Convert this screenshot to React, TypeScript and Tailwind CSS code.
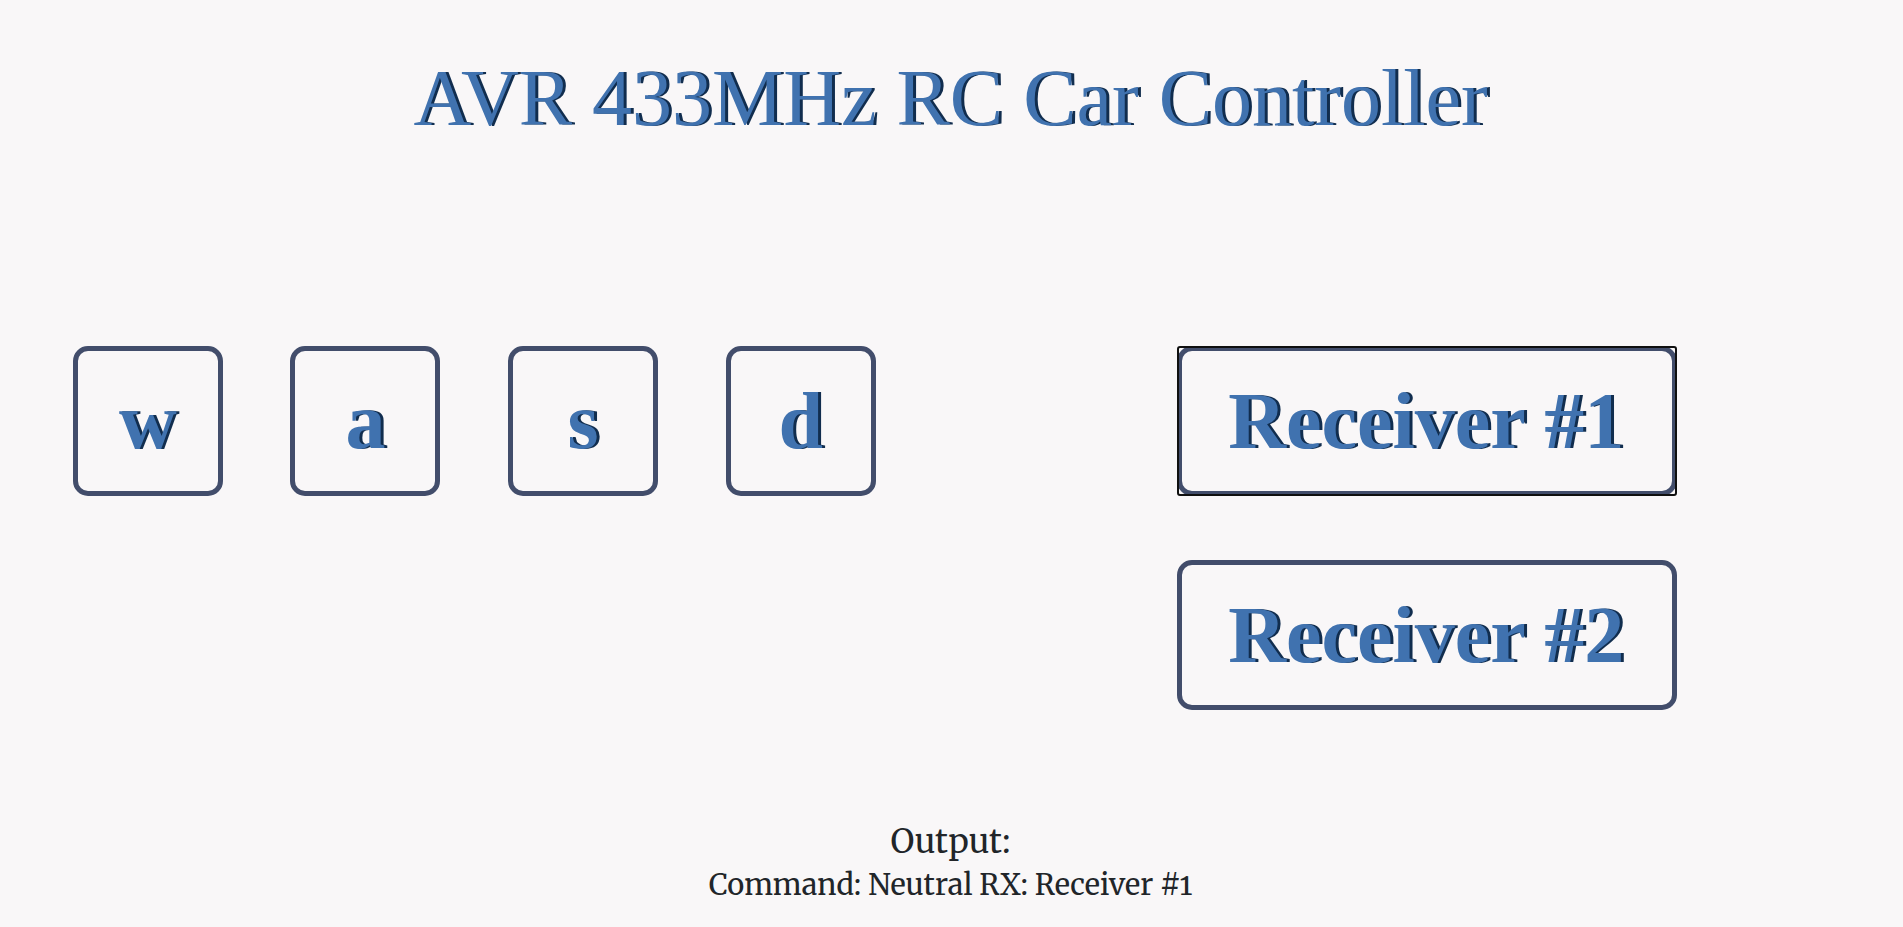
import { useState } from "react";

const KEYS = ["w", "a", "s", "d"];
const COMMANDS: Record<string, string> = { w: "Forward", a: "Left", s: "Reverse", d: "Right" };
const RECEIVERS = ["Receiver #1", "Receiver #2"];

const display =
  "font-['Liberation_Serif',serif] text-[80px] leading-[120px] text-[#4072af] [text-shadow:3px_0_#112d4e]";
const frame = "h-[150px] rounded-[15px] border-[5px] border-[#424d6b] font-bold";

export default function App() {
  const [command, setCommand] = useState("Neutral");
  const [receiver, setReceiver] = useState(RECEIVERS[0]);

  return (
    <main className="flex min-h-screen flex-col bg-[#f9f7f8] pt-[38px] text-[#212529]">
      <h1 className={`pr-0.5 text-center ${display}`}>AVR 433MHz RC Car Controller</h1>

      <div className="mt-[188px] grid grid-cols-2 items-start">
        <div className="grid grid-cols-4 justify-items-center pr-[42px] pl-[39px]">
          {KEYS.map((key) => (
            <button
              key={key}
              type="button"
              className={`w-[150px] ${frame} ${display}`}
              onPointerDown={() => setCommand(COMMANDS[key])}
              onPointerUp={() => setCommand("Neutral")}
            >
              {key}
            </button>
          ))}
        </div>
        <div className="flex flex-col items-center gap-16">
          {RECEIVERS.map((name) => (
            <button
              key={name}
              type="button"
              aria-pressed={receiver === name}
              className={`w-[500px] pr-0.5 whitespace-nowrap ${frame} ${display} ${receiver === name ? "relative after:absolute after:-inset-[5px] after:rounded-[3px] after:border-2 after:border-[#101010]" : ""}`}
              onClick={() => setReceiver(name)}
            >
              {name}
            </button>
          ))}
        </div>
      </div>

      <section className="mt-[107px] pr-0.5 text-center font-['Merriweather','Liberation_Serif',serif] oldstyle-nums">
        <h2 className="text-[33px] leading-[50px]">Output:</h2>
        <p className="text-[29px] leading-[36px]">
          Command: {command} RX: {receiver}
        </p>
      </section>
    </main>
  );
}
